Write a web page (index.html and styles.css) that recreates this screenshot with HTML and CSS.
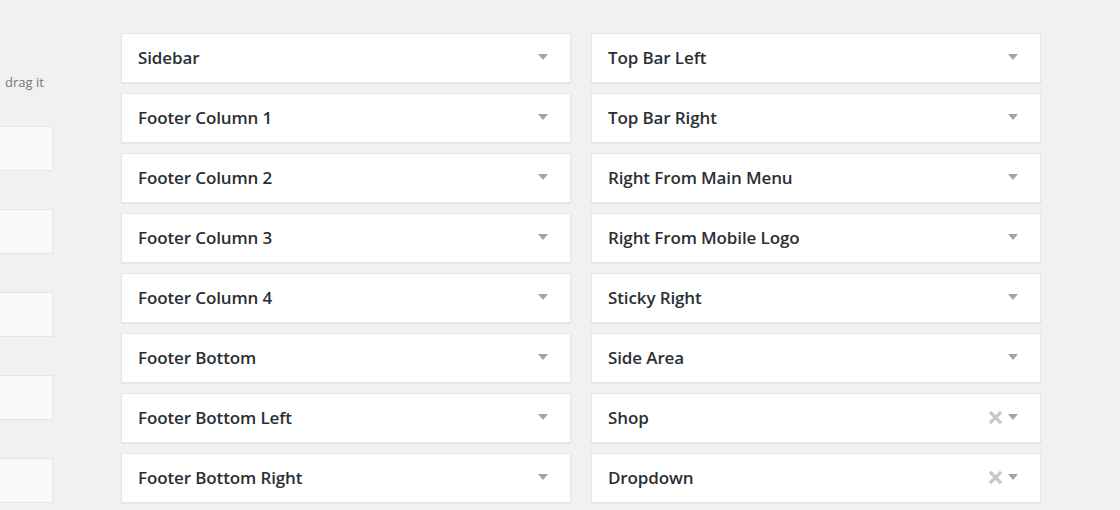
FILE: index.html
```html
<!DOCTYPE html>
<html>
<head>
<meta charset="utf-8">
<link rel="stylesheet" href="styles.css">
</head>
<body>
<div class="page">
  <div class="available">
    <p class="hint">drag it</p>
    <div class="slot"></div>
    <div class="slot"></div>
    <div class="slot"></div>
    <div class="slot"></div>
    <div class="slot"></div>
  </div>
  <div class="col">
    <div class="area"><h2>Sidebar</h2><span class="tools"><span class="arrow"></span></span></div>
    <div class="area"><h2>Footer Column 1</h2><span class="tools"><span class="arrow"></span></span></div>
    <div class="area"><h2>Footer Column 2</h2><span class="tools"><span class="arrow"></span></span></div>
    <div class="area"><h2>Footer Column 3</h2><span class="tools"><span class="arrow"></span></span></div>
    <div class="area"><h2>Footer Column 4</h2><span class="tools"><span class="arrow"></span></span></div>
    <div class="area"><h2>Footer Bottom</h2><span class="tools"><span class="arrow"></span></span></div>
    <div class="area"><h2>Footer Bottom Left</h2><span class="tools"><span class="arrow"></span></span></div>
    <div class="area"><h2>Footer Bottom Right</h2><span class="tools"><span class="arrow"></span></span></div>
  </div>
  <div class="col">
    <div class="area"><h2>Top Bar Left</h2><span class="tools"><span class="arrow"></span></span></div>
    <div class="area"><h2>Top Bar Right</h2><span class="tools"><span class="arrow"></span></span></div>
    <div class="area"><h2>Right From Main Menu</h2><span class="tools"><span class="arrow"></span></span></div>
    <div class="area"><h2>Right From Mobile Logo</h2><span class="tools"><span class="arrow"></span></span></div>
    <div class="area"><h2>Sticky Right</h2><span class="tools"><span class="arrow"></span></span></div>
    <div class="area"><h2>Side Area</h2><span class="tools"><span class="arrow"></span></span></div>
    <div class="area"><h2>Shop</h2><span class="tools"><svg class="del" width="13" height="13" viewBox="0 0 13 13"><path d="M2 2 L11 11 M11 2 L2 11" stroke="#c8c8c8" stroke-width="3.2" stroke-linecap="square"/></svg><span class="arrow"></span></span></div>
    <div class="area"><h2>Dropdown</h2><span class="tools"><svg class="del" width="13" height="13" viewBox="0 0 13 13"><path d="M2 2 L11 11 M11 2 L2 11" stroke="#c8c8c8" stroke-width="3.2" stroke-linecap="square"/></svg><span class="arrow"></span></span></div>
  </div>
</div>
</body>
</html>
```

FILE: styles.css
```css
html, body {
  margin: 0;
  padding: 0;
  background: #f1f1f1;
  height: 100%;
  overflow: hidden;
}
body {
  font-family: "Open Sans", "Liberation Sans", sans-serif;
  color: #23282d;
}
.page {
  display: flex;
  align-items: flex-start;
  padding-top: 33px;
}
.available {
  width: 53px;
  flex: none;
  margin-right: 68px;
  overflow: hidden;
  display: flex;
  flex-direction: column;
  align-items: flex-end;
}
.hint {
  margin: 40px 0 0 0;
  padding-left: 5px;
  box-sizing: border-box;
  font-size: 13px;
  line-height: 18px;
  color: #72777c;
  white-space: nowrap;
  width: 100%;
}
.slot {
  width: 80px;
  background: #fafafa;
  border: 1px solid #e5e5e5;
  box-sizing: border-box;
  height: 45px;
  flex: none;
}
.hint + .slot { margin-top: 35px; }
.slot + .slot { margin-top: 38px; }
.col {
  width: 450px;
  flex: none;
  display: flex;
  flex-direction: column;
  gap: 10px;
}
.col + .col { margin-left: 20px; }
.area {
  box-sizing: border-box;
  height: 50px;
  background: #fff;
  border: 1px solid #e5e5e5;
  box-shadow: 0 1px 1px rgba(0,0,0,0.04);
  display: flex;
  align-items: center;
  padding: 0 22px 0 16px;
}
.area h2 {
  margin: 0;
  flex: 1;
  font-size: 17px;
  font-weight: 600;
  letter-spacing: -0.12px;
  line-height: 24px;
  color: #2a2f34;
}
.tools {
  display: flex;
  align-items: center;
  gap: 6px;
}
.arrow {
  width: 0;
  height: 0;
  border-left: 5px solid transparent;
  border-right: 5px solid transparent;
  border-top: 6px solid #a0a5aa;
  margin-top: -2px;
}
.del { display: block; margin-top: -1px; }
```
